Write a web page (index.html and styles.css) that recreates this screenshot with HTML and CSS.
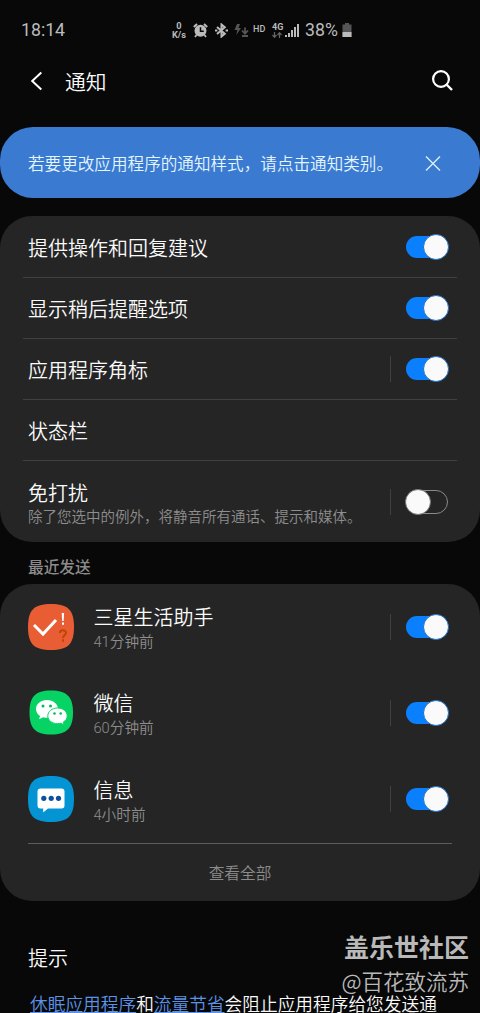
FILE: index.html
```html
<!DOCTYPE html>
<html lang="zh-CN">
    <head>
        <meta charset="UTF-8">
        <meta name="viewport" content="width=device-width,initial-scale=1">
        <title>通知</title>
        <link rel="stylesheet" href="styles.css">
    </head>
    <body>
        <div class="page-container">
            <div class="status-bar">
                <span class="clock">18:14</span>
                <div class="status-icons">
                    <div class="speed"><span>0</span><span>K/s</span></div>
                    <svg class="alarm" width="15" height="15" viewBox="0 0 15 15">
                        <path d="M.8 4 4 1M14.200 4 11 1" stroke="#bbb" stroke-width="2"/>
                        <path d="M3.500 12 2 14M11.500 12 13 14" stroke="#bbb" stroke-width="1.8"/>
                        <circle cx="7.5" cy="7.8" r="6" fill="#bbb"/>
                        <path d="M7.500 4.200V8.300H10.800" fill="none" stroke="#080808" stroke-width="1.500"/>
                    </svg>
                    <svg class="bluetooth" width="13" height="15" viewBox="0 0 13 15">
                        <path d="M2 4 9.800 10.700 6.500 13.500V1.500L9.800 4.300 2 11" fill="none" stroke="#bbb" stroke-width="2"/>
                        <path d="M0 6.500h2.400v2H0zM10.600 6.500H13v2h-2.400z" fill="#bbb"/>
                    </svg>
                    <svg class="charge" width="15" height="15" viewBox="0 0 15 15">
                        <path d="M3 1h3L4.500 5H7L2.300 12 3.300 7H0.500z" fill="#555"/>
                        <path d="M11 4.500v5M8 7.500l3 3.200 3-3.200M8 13h6" fill="none" stroke="#555" stroke-width="1.8"/>
                    </svg>
                    <span class="hd">HD</span>
                    <div class="network">
                        <span>4G</span>
                        <svg width="10" height="6" viewBox="0 0 10 6">
                            <path d="M2.500 0v5M.5 3l2 2.300 2-2.300M7.500 6V1M5.500 3l2-2.300 2 2.300" fill="none" stroke="#666" stroke-width="1.2"/>
                        </svg>
                    </div>
                    <svg class="signal" width="14" height="13" viewBox="0 0 14 13">
                        <path d="M0 11h2v2H0zM3 9h2v4H3zM6 6h2v7H6zM9 3h2v10H9zM12 0h2v13h-2z" fill="#bbb"/>
                    </svg>
                    <span class="percent">38%</span>
                    <svg class="battery" width="10" height="14" viewBox="0 0 10 14">
                        <path d="M3 0h4v1.500h2.500V14H.5V1.500H3z" fill="#555"/>
                        <path d="M.5 9h9v5h-9z" fill="#bbb"/>
                    </svg>
                </div>
            </div>

            <div class="header">
                <svg class="back" width="13" height="20" viewBox="0 0 13 20">
                    <path d="M11.300 1.400 2.200 10l9.100 8.600" fill="none" stroke="#fff" stroke-width="2"/>
                </svg>
                <h1>通知</h1>
                <svg class="search" width="22" height="22" viewBox="0 0 22 22">
                    <circle cx="10" cy="9" r="7.900" fill="none" stroke="#fff" stroke-width="2.2"/>
                    <path d="M15.500 14.500l5.500 5.500" stroke="#fff" stroke-width="2.4"/>
                </svg>
            </div>

            <div class="banner">
                <p>若要更改应用程序的通知样式，请点击通知类别。</p>
                <svg width="16" height="16" viewBox="0 0 16 16">
                    <path d="M1 1.500l14 14M15 1.500l-14 14" stroke="#d9f0ff" stroke-width="1.4"/>
                </svg>
            </div>

            <div class="card settings">
                <div class="row">
                    <p class="label">提供操作和回复建议</p>
                    <span class="toggle on"></span>
                </div>
                <div class="row">
                    <p class="label">显示稍后提醒选项</p>
                    <span class="toggle on"></span>
                </div>
                <div class="row">
                    <p class="label">应用程序角标</p>
                    <span class="bar"></span>
                    <span class="toggle on"></span>
                </div>
                <div class="row">
                    <p class="label">状态栏</p>
                </div>
                <div class="row tall">
                    <div class="text">
                        <p class="label">免打扰</p>
                        <p class="sub">除了您选中的例外，将静音所有通话、提示和媒体。</p>
                    </div>
                    <span class="bar"></span>
                    <span class="toggle"></span>
                </div>
            </div>

            <h2>最近发送</h2>

            <div class="card apps">
                <div class="app">
                    <svg class="icon" width="46" height="46" viewBox="0 0 46 46">
                        <path d="M23 0C40 0 46 6 46 23S40 46 23 46 0 40 0 23 6 0 23 0z" fill="#e85d33"/>
                        <path d="M6 21l9 9 13-14" fill="none" stroke="#fff" stroke-width="3"/>
                        <path d="M33.700 9h2.400l-.4 8h-1.600zM34 18.500h2v2.200h-2z" fill="#fff"/>
                        <path d="M31.800 29c0-3.800 6.200-3.600 6.200-.3 0 2.600-3 2.500-3 5.300M35 35.300v2.400" fill="none" stroke="#c54300" stroke-width="2"/>
                    </svg>
                    <div class="text">
                        <p class="label">三星生活助手</p>
                        <p class="sub">41分钟前</p>
                    </div>
                    <span class="bar"></span>
                    <span class="toggle on"></span>
                </div>
                <div class="app">
                    <svg class="icon" width="46" height="46" viewBox="0 0 46 46">
                        <path d="M23 .5C39 .5 45 7 45 22.500S39 44.500 23 44.500 1.500 38 1.500 22.500 7 .5 23 .5z" fill="#07d365"/>
                        <path d="M19 10c-6.300 0-11 4-11 9 0 2.900 1.600 5.400 4.100 7L11 29.300l4.200-2.100c1.300.4 2.500.5 3.800.5 6.300 0 11-3.800 11-8.700s-4.700-9-11-9z" fill="#fff"/>
                        <path d="M29.500 18c-5.400 0-9.700 3.500-9.700 7.900s4.300 7.800 9.700 7.800c1.200 0 2.300-.2 3.300-.5l3.400 1.800-.9-2.900c2.400-1.400 3.900-3.600 3.900-6.200 0-4.400-4.300-7.900-9.700-7.900z" fill="#fff" stroke="#07d365" stroke-width="1"/>
                        <g fill="#07b957">
                            <circle cx="15" cy="16" r="1.500"/>
                            <circle cx="22.500" cy="16" r="1.500"/>
                            <circle cx="26.500" cy="23.500" r="1.300"/>
                            <circle cx="32.700" cy="23.500" r="1.300"/>
                        </g>
                    </svg>
                    <div class="text">
                        <p class="label">微信</p>
                        <p class="sub">60分钟前</p>
                    </div>
                    <span class="bar"></span>
                    <span class="toggle on"></span>
                </div>
                <div class="app">
                    <svg class="icon" width="46" height="46" viewBox="0 0 46 46">
                        <path d="M23 0C40 0 46 6 46 23S40 46 23 46 0 40 0 23 6 0 23 0z" fill="#0494d4"/>
                        <path d="M12.500 12.500h21a3 3 0 0 1 3 3v14a3 3 0 0 1-3 3H20l-4.800 4v-4h-2.700a3 3 0 0 1-3-3v-14a3 3 0 0 1 3-3z" fill="#fff"/>
                        <g fill="#0b4f9e">
                            <circle cx="15.800" cy="22.300" r="2.600"/>
                            <circle cx="23.200" cy="22.300" r="2.600"/>
                            <circle cx="30.500" cy="22.300" r="2.600"/>
                        </g>
                    </svg>
                    <div class="text">
                        <p class="label">信息</p>
                        <p class="sub">4小时前</p>
                    </div>
                    <span class="bar"></span>
                    <span class="toggle on"></span>
                </div>
                <div class="view-all">查看全部</div>
            </div>

            <div class="tips">
                <h3>提示</h3>
                <p><a>休眠应用程序</a>和<a>流量节省</a>会阻止应用程序给您发送通</p>
            </div>

            <div class="watermark">
                <p class="community">盖乐世社区</p>
                <p class="user">@百花致流苏</p>
            </div>
        </div>
    </body>
</html>
```

FILE: styles.css
```css
*, *::before, *::after {
    box-sizing: border-box;
}
html, body {
    margin: 0;
    padding: 0;
    background-color: #080808;
}
body {
    font-family: Roboto, "Noto Sans CJK SC", sans-serif;
    color: #fafafa;
}
p, h1, h2, h3 {
    margin: 0;
    font-weight: 350;
    white-space: nowrap;
}
svg {
    display: block;
    flex: none;
}
.page-container {
    position: relative;
    width: 480px;
    height: 1013px;
    overflow: hidden;
}

/* status bar */
.status-bar {
    display: flex;
    align-items: center;
    height: 60px;
    padding-left: 21px;
    color: #bbb;
}
.clock {
    width: 150px;
    font-size: 17.700px;
}
.status-icons {
    display: flex;
    align-items: center;
}
.speed {
    display: flex;
    flex-direction: column;
    align-items: center;
    width: 16px;
    font-size: 9.200px;
    font-weight: 700;
    line-height: 9px;
}
.alarm {
    margin-left: 6px;
}
.bluetooth {
    margin-left: 7px;
}
.charge {
    margin-left: 6px;
}
.hd {
    width: 13px;
    margin-left: 4px;
    padding-bottom: 2px;
    font-size: 9px;
    font-weight: 500;
    line-height: 10px;
}
.network {
    width: 11px;
    margin-left: 6px;
    font-size: 9px;
    font-weight: 700;
    line-height: 9px;
}
.network span {
    display: block;
}
.signal {
    margin-left: 2px;
    margin-top: 1px;
}
.percent {
    width: 33px;
    margin-left: 6px;
    font-size: 17.700px;
}
.battery {
    margin-left: 4px;
}

/* title */
.header {
    display: flex;
    align-items: center;
    height: 42px;
    padding: 0 27px 0 30px;
}
.header h1 {
    flex: 1;
    margin-left: 22px;
    font-size: 20.800px;
}

.banner {
    display: flex;
    align-items: center;
    justify-content: space-between;
    height: 71px;
    margin-top: 25px;
    padding: 0 39px 0 28px;
    border-radius: 33px;
    background-color: #3a7ad1;
    color: #e4f6ff;
    font-size: 16.600px;
}

/* cards */
.card {
    border-radius: 32px;
    background-color: #252525;
}
.settings {
    margin-top: 18px;
    padding: 0 23px;
}
.row {
    display: flex;
    align-items: center;
    height: 61px;
    padding: 0 9px 0 5px;
    border-bottom: 1px solid #404040;
}
.row:first-child {
    height: 62px;
}
.row:first-child .label {
    padding-top: 4px;
}
.row.tall {
    height: 81px;
    border-bottom: none;
}
.row.tall .text {
    padding-top: 3px;
}
.label {
    flex: 1;
    padding-top: 3px;
    font-size: 20px;
    line-height: 26px;
}
.text {
    flex: 1;
}
.sub {
    font-size: 14.650px;
    line-height: 22px;
    color: #8e8e8e;
}
.row .sub {
    font-size: 14.500px;
}
.bar {
    flex: none;
    width: 1px;
    height: 26px;
    margin-right: 15px;
    background-color: #404040;
}
.toggle {
    position: relative;
    flex: none;
    width: 42px;
    height: 24px;
    border: 1px solid #8a8a8a;
    border-radius: 12px;
}
.toggle::after {
    content: "";
    position: absolute;
    top: -2px;
    left: -2px;
    width: 26px;
    height: 26px;
    border: 1px solid #777;
    border-radius: 50%;
    background-color: #fafafa;
}
.toggle.on {
    height: 22px;
    border: none;
    background-color: #0a80ff;
}
.toggle.on::after {
    left: 17px;
    border-color: #1b70c8;
}

h2 {
    height: 42px;
    padding-left: 28px;
    font-size: 15.700px;
    font-weight: 500;
    line-height: 51px;
    color: #8b8b8b;
}

.app {
    display: flex;
    align-items: center;
    height: 86px;
    padding: 0 32px 0 28px;
}
.app .text {
    margin-left: 19.500px;
}
.app:nth-child(3) {
    margin-bottom: 1px;
}
.app:nth-child(3) .text {
    padding-top: 2px;
}
.view-all {
    height: 58px;
    margin: 0 28px;
    border-top: 1px solid #5c5c5c;
    font-size: 15.700px;
    font-weight: 350;
    line-height: 60px;
    text-align: center;
    color: #8b8b8b;
}

/* tips */
.tips {
    padding: 44px 0 0 28px;
}
.tips h3 {
    font-size: 20px;
    line-height: 28px;
}
.tips p {
    margin: 17px 0 0 2px;
    font-size: 17.700px;
    line-height: 30px;
}
.tips a {
    color: #5c93e6;
    text-decoration: underline;
}

.watermark {
    position: absolute;
    right: 11px;
    bottom: 16px;
    text-align: right;
    color: #b9b9b9;
}
.community {
    font-size: 25px;
    font-weight: 700;
    line-height: 32px;
}
.user {
    font-family: "Noto Sans CJK SC", sans-serif;
    font-size: 21.500px;
    line-height: 32px;
}
```
